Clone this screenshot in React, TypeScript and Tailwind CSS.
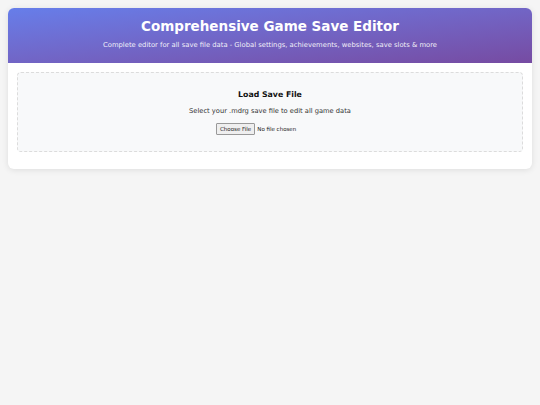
export default function App() {
  return (
    <div className="min-h-screen bg-[#f5f5f5] p-2 font-['DejaVu_Sans',sans-serif]">
      <div className="overflow-hidden rounded-md bg-white shadow-[0_1px_6px_rgba(0,0,0,0.1)]">
        {/* Header */}
        <header className="flex h-[55px] flex-col items-center justify-center bg-gradient-to-br from-[#667eea] to-[#764ba2] pb-[3px] text-white">
          <h1 className="text-[13.5px] font-bold leading-tight">Comprehensive Game Save Editor</h1>
          <p className="mt-[5px] text-[6.8px] opacity-90">
            Complete editor for all save file data - Global settings, achievements, websites, save slots &amp; more
          </p>
        </header>

        {/* Load box */}
        <main className="p-[9px] pb-[17px]">
          <div className="flex h-[80px] flex-col items-center justify-center rounded-[4px] border border-dashed border-[#dcdcdc] bg-[#f8f9fa]">
            <h2 className="text-[7.8px] font-bold text-[#111]">Load Save File</h2>
            <p className="mt-[6px] text-[6.7px] text-[#333]">Select your .mdrg save file to edit all game data</p>
            <div className="mt-[7px] flex w-[108px] items-center gap-[2px] text-[5.5px] text-[#222]">
              <span className="rounded-[1px] border border-[#999] bg-[#efefef] px-[3px] py-[1px]">Choose File</span>
              <span>No file chosen</span>
            </div>
          </div>
        </main>
      </div>
    </div>
  );
}
